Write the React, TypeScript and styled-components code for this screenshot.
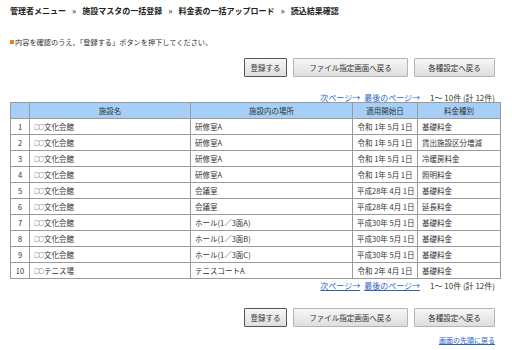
import React from "react";
import styled, { createGlobalStyle } from "styled-components";

interface Row {
  no: number;
  facility: string;
  place: string;
  date: string;
  kind: string;
}

const rows: Row[] = [
  { no: 1, facility: "文化会館", place: "研修室A", date: "令和 1年 5月 1日", kind: "基礎料金" },
  { no: 2, facility: "文化会館", place: "研修室A", date: "令和 1年 5月 1日", kind: "賃出施設区分増減" },
  { no: 3, facility: "文化会館", place: "研修室A", date: "令和 1年 5月 1日", kind: "冷暖房料金" },
  { no: 4, facility: "文化会館", place: "研修室A", date: "令和 1年 5月 1日", kind: "照明料金" },
  { no: 5, facility: "文化会館", place: "会議室", date: "平成28年 4月 1日", kind: "基礎料金" },
  { no: 6, facility: "文化会館", place: "会議室", date: "平成28年 4月 1日", kind: "延長料金" },
  { no: 7, facility: "文化会館", place: "ホール(1／3面A)", date: "平成30年 5月 1日", kind: "基礎料金" },
  { no: 8, facility: "文化会館", place: "ホール(1／3面B)", date: "平成30年 5月 1日", kind: "基礎料金" },
  { no: 9, facility: "文化会館", place: "ホール(1／3面C)", date: "平成30年 5月 1日", kind: "基礎料金" },
  { no: 10, facility: "テニス場", place: "テニスコートA", date: "令和 2年 4月 1日", kind: "基礎料金" },
];

const GlobalStyle = createGlobalStyle`
  body {
    margin: 0;
    background: #ffffff;
    font-family: "Noto Sans CJK JP", "Noto Sans", sans-serif;
    color: #333333;
  }
`;

const Page = styled.div`
  width: 485px;
  margin-left: 10px;
  padding-top: 4px;
  display: flex;
  flex-direction: column;
`;

const Breadcrumb = styled.div`
  display: flex;
  align-items: center;
  gap: 6px;
  height: 12px;
  font-size: 8px;
  font-weight: bold;
  color: #222222;
  white-space: nowrap;
`;

const Sep = styled.span`
  font-size: 8px;
  color: #555555;
`;

const Message = styled.div`
  margin-top: 20px;
  height: 12px;
  font-size: 7.2px;
  display: flex;
  align-items: center;
  white-space: nowrap;
`;

const Bullet = styled.span`
  display: inline-block;
  width: 4px;
  height: 4px;
  background: #f07c1a;
  margin-right: 1px;
`;

const ButtonRow = styled.div<{ $top: number }>`
  margin-top: ${(p) => p.$top}px;
  display: flex;
  justify-content: flex-end;
  gap: 6px;
`;

const Button = styled.button<{ $w: number; $primary?: boolean }>`
  width: ${(p) => p.$w}px;
  height: 19px;
  padding: 0;
  font-family: inherit;
  font-size: 7.5px;
  color: #333333;
  border: 1px solid ${(p) => (p.$primary ? "#555555" : "#b4b4b4")};
  border-radius: 1px;
  background: linear-gradient(#f7f7f7, #dedede);
  cursor: pointer;
`;

const Pager = styled.div<{ $top: number }>`
  margin-top: ${(p) => p.$top}px;
  height: 10px;
  display: flex;
  justify-content: flex-end;
  align-items: center;
  gap: 4px;
  font-size: 8px;
  white-space: nowrap;
`;

const Link = styled.a`
  color: #2a62c9;
  text-decoration: underline;
  cursor: pointer;
`;

const Count = styled.span`
  margin-left: 6px;
  color: #333333;
`;

const Table = styled.table`
  width: 485px;
  border-collapse: collapse;
  font-size: 7.5px;
  table-layout: fixed;
`;

const Th = styled.th<{ $w: number }>`
  width: ${(p) => p.$w}px;
  height: 15px;
  padding: 0;
  background: #a5cff7;
  border: 1px solid #9a9a9a;
  font-weight: normal;
  color: #333333;
  text-align: center;
`;

const Td = styled.td<{ $align?: string }>`
  height: 15px;
  padding: 0 4px;
  border: 1px solid #9a9a9a;
  text-align: ${(p) => p.$align ?? "left"};
  white-space: nowrap;
  overflow: hidden;
`;

const Mark = styled.span`
  font-size: 5.5px;
  color: #222222;
  letter-spacing: -1px;
  margin-right: 1px;
  vertical-align: 1px;
`;

const Footer = styled.div`
  margin-top: 8px;
  display: flex;
  justify-content: flex-end;
  font-size: 7px;
`;

const Buttons: React.FC<{ top: number }> = ({ top }) => (
  <ButtonRow $top={top}>
    <Button $w={43} $primary>登録する</Button>
    <Button $w={115}>ファイル指定画面へ戻る</Button>
    <Button $w={81}>各種設定へ戻る</Button>
  </ButtonRow>
);

const PageNav: React.FC<{ top: number }> = ({ top }) => (
  <Pager $top={top}>
    <Link>次ページ→</Link>
    <Link>最後のページ→</Link>
    <Count>1～ 10件 (計 12件)</Count>
  </Pager>
);

const App: React.FC = () => {
  return (
    <>
      <GlobalStyle />
      <Page>
        <Breadcrumb>
          <span>管理者メニュー</span>
          <Sep>»</Sep>
          <span>施設マスタの一括登録</span>
          <Sep>»</Sep>
          <span>料金表の一括アップロード</span>
          <Sep>»</Sep>
          <span>読込結果確認</span>
        </Breadcrumb>
        <Message>
          <Bullet />
          内容を確認のうえ、「登録する」ボタンを押下してください。
        </Message>
        <Buttons top={10} />
        <PageNav top={15} />
        <Table>
          <thead>
            <tr>
              <Th $w={18}></Th>
              <Th $w={160}>施設名</Th>
              <Th $w={161}>施設内の場所</Th>
              <Th $w={64}>適用開始日</Th>
              <Th $w={82}>料金種別</Th>
            </tr>
          </thead>
          <tbody>
            {rows.map((r) => (
              <tr key={r.no}>
                <Td $align="center">{r.no}</Td>
                <Td>
                  <Mark>○○</Mark>
                  {r.facility}
                </Td>
                <Td>{r.place}</Td>
                <Td $align="center">{r.date}</Td>
                <Td>{r.kind}</Td>
              </tr>
            ))}
          </tbody>
        </Table>
        <PageNav top={1} />
        <Buttons top={18} />
        <Footer>
          <Link>画面の先頭に戻る</Link>
        </Footer>
      </Page>
    </>
  );
};

export default App;
